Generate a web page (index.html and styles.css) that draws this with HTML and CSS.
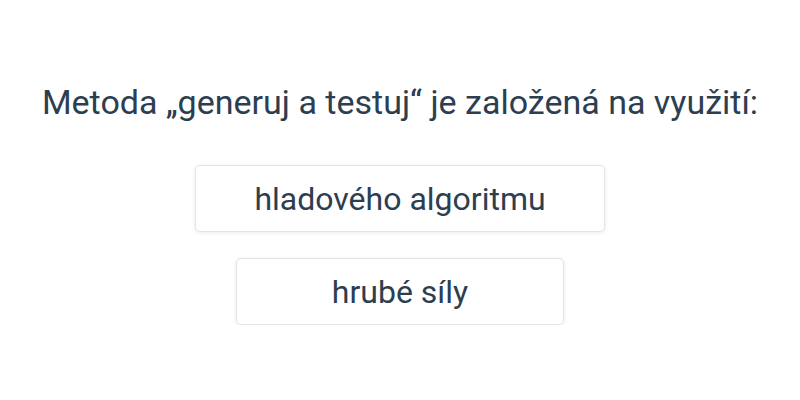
FILE: index.html
```html
<!DOCTYPE html>
<html lang="cs">
<head>
<meta charset="utf-8">
<title>Kvíz</title>
<link rel="stylesheet" href="styles.css">
</head>
<body>
<main class="quiz">
  <h1 class="question">Metoda „generuj a testuj“ je založená na využití:</h1>
  <div class="answers">
    <button class="answer">hladového algoritmu</button>
    <button class="answer">hrubé síly</button>
  </div>
</main>
</body>
</html>
```
FILE: styles.css
```css
html, body {
  margin: 0;
  padding: 0;
  background: #ffffff;
}
body {
  font-family: Roboto, "Noto Sans", sans-serif;
  color: #2c3e50;
}
.quiz {
  display: flex;
  flex-direction: column;
  align-items: center;
  padding-top: 82px;
}
.question {
  margin: 0;
  font-size: 34px;
  font-weight: 400;
  line-height: 40px;
  text-align: center;
  white-space: nowrap;
}
.answers {
  display: flex;
  flex-direction: column;
  align-items: center;
  gap: 26px;
  margin-top: 43px;
}
.answer {
  box-sizing: border-box;
  min-width: 328px;
  height: 67px;
  padding: 0 58px;
  font-family: inherit;
  font-size: 32px;
  color: #2c3e50;
  background: #ffffff;
  border: 1px solid #e4e4e4;
  border-radius: 5px;
  box-shadow: 0 1px 4px rgba(0, 0, 0, 0.08);
  cursor: pointer;
}
```
